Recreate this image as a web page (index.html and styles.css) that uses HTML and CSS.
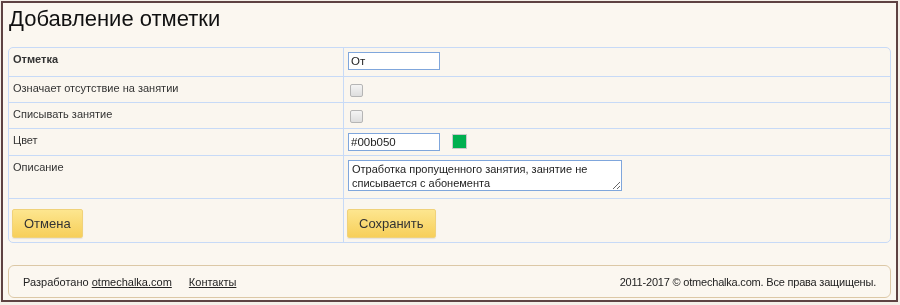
FILE: index.html
```html
<!DOCTYPE html>
<html lang="ru">
<head>
    <meta charset="UTF-8">
    <title>Добавление отметки</title>
    <link rel="stylesheet" href="styles.css">
</head>
<body>
    <div class="frame">
        <h1>Добавление отметки</h1>

        <table class="form-table">
            <tr>
                <td class="label"><strong>Отметка</strong></td>
                <td><input type="text" class="field" value="От"></td>
            </tr>
            <tr>
                <td class="label">Означает отсутствие на занятии</td>
                <td><span class="check"></span></td>
            </tr>
            <tr>
                <td class="label">Списывать занятие</td>
                <td><span class="check"></span></td>
            </tr>
            <tr>
                <td class="label">Цвет</td>
                <td class="color-cell">
                    <input type="text" class="field" value="#00b050">
                    <span class="swatch"></span>
                </td>
            </tr>
            <tr class="tall">
                <td class="label">Описание</td>
                <td><textarea class="note">Отработка пропущенного занятия, занятие не списывается с абонемента</textarea></td>
            </tr>
            <tr class="actions">
                <td><button class="btn">Отмена</button></td>
                <td><button class="btn">Сохранить</button></td>
            </tr>
        </table>

        <div class="footer">
            <div class="footer-left">
                Разработано <a href="#">otmechalka.com</a>
                <a href="#" class="contacts">Контакты</a>
            </div>
            <div class="copy">2011-2017 © otmechalka.com. Все права защищены.</div>
        </div>
    </div>
</body>
</html>
```

FILE: styles.css
```css
body {
    margin: 1px 2px 2px 1px;
    background: #f4efe8;
    font-family: "Liberation Sans", Arial, sans-serif;
    font-size: 11px;
    color: #333;
}
.frame {
    border: 2px solid #5e4242;
    background: #fbf7f0;
    padding: 0 5px 3px 5px;
    height: 301px;
    box-sizing: border-box;
}
h1 {
    font-weight: normal;
    font-size: 22px;
    line-height: 25px;
    color: #111;
    margin: 0;
    padding: 3px 0 0 1px;
    height: 44px;
    box-sizing: border-box;
}
.form-table {
    width: 100%;
    border-collapse: separate;
    border-spacing: 0;
    border: 1px solid #c7daf7;
    border-radius: 5px;
    background: #faf6ef;
}
.form-table td {
    border-top: 1px solid #c7daf7;
    padding: 4px 4px 0 4px;
    vertical-align: top;
    height: 21px;
}
.form-table tr:first-child td {
    border-top: none;
    height: 24px;
}
.form-table td:first-child {
    width: 326px;
    border-right: 1px solid #c7daf7;
}
.form-table td.label {
    padding-top: 5px;
    height: 20px;
}
.form-table tr:first-child td.label {
    padding-top: 5px;
    height: 23px;
}
.form-table tr:nth-child(4) td {
    height: 22px;
}
.form-table tr:nth-child(4) td.label {
    height: 21px;
}
.form-table tr.tall td {
    height: 38px;
}
.form-table tr.tall td.label {
    height: 37px;
}
.form-table tr.actions td {
    padding: 10px 3px 0 3px;
    height: 33px;
}
.field {
    width: 92px;
    height: 18px;
    box-sizing: border-box;
    border: 1px solid #7fa6dc;
    padding: 1px 2px;
    font-family: "Liberation Sans", Arial, sans-serif;
    font-size: 11.5px;
    color: #222;
    margin: 0;
    background: #fff;
}
.check {
    display: inline-block;
    width: 11px;
    height: 11px;
    border: 1px solid #b5b5b5;
    border-radius: 2px;
    background: linear-gradient(#f4f4f4, #dedede);
    margin: 3px 0 0 2px;
}
.color-cell .swatch {
    display: inline-block;
    width: 13px;
    height: 13px;
    background: #00b050;
    border: 1px solid #c9c9c9;
    vertical-align: top;
    margin: 1px 0 0 9px;
}
.note {
    width: 274px;
    height: 31px;
    box-sizing: border-box;
    border: 1px solid #7fa6dc;
    padding: 1px 3px;
    font-family: "Liberation Sans", Arial, sans-serif;
    font-size: 11px;
    line-height: 14px;
    color: #222;
    resize: vertical;
    margin: 0;
    display: block;
}
.btn {
    height: 29px;
    padding: 0 11px;
    border: 1px solid #f0d27a;
    border-radius: 2px;
    background: linear-gradient(#fde68f, #f7cf5a);
    font-family: "Liberation Sans", Arial, sans-serif;
    font-size: 13px;
    color: #333;
    box-shadow: 0 1px 1px rgba(0, 0, 0, 0.08);
}
.footer {
    margin-top: 22px;
    border: 1px solid #dcc8a6;
    border-radius: 6px;
    height: 33px;
    box-sizing: border-box;
    padding: 0 14px;
    display: flex;
    justify-content: space-between;
    align-items: center;
    color: #222;
}
.footer a {
    color: #222;
}
.footer-left .contacts {
    margin-left: 14px;
}
.footer .copy {
    letter-spacing: -0.2px;
}
```
